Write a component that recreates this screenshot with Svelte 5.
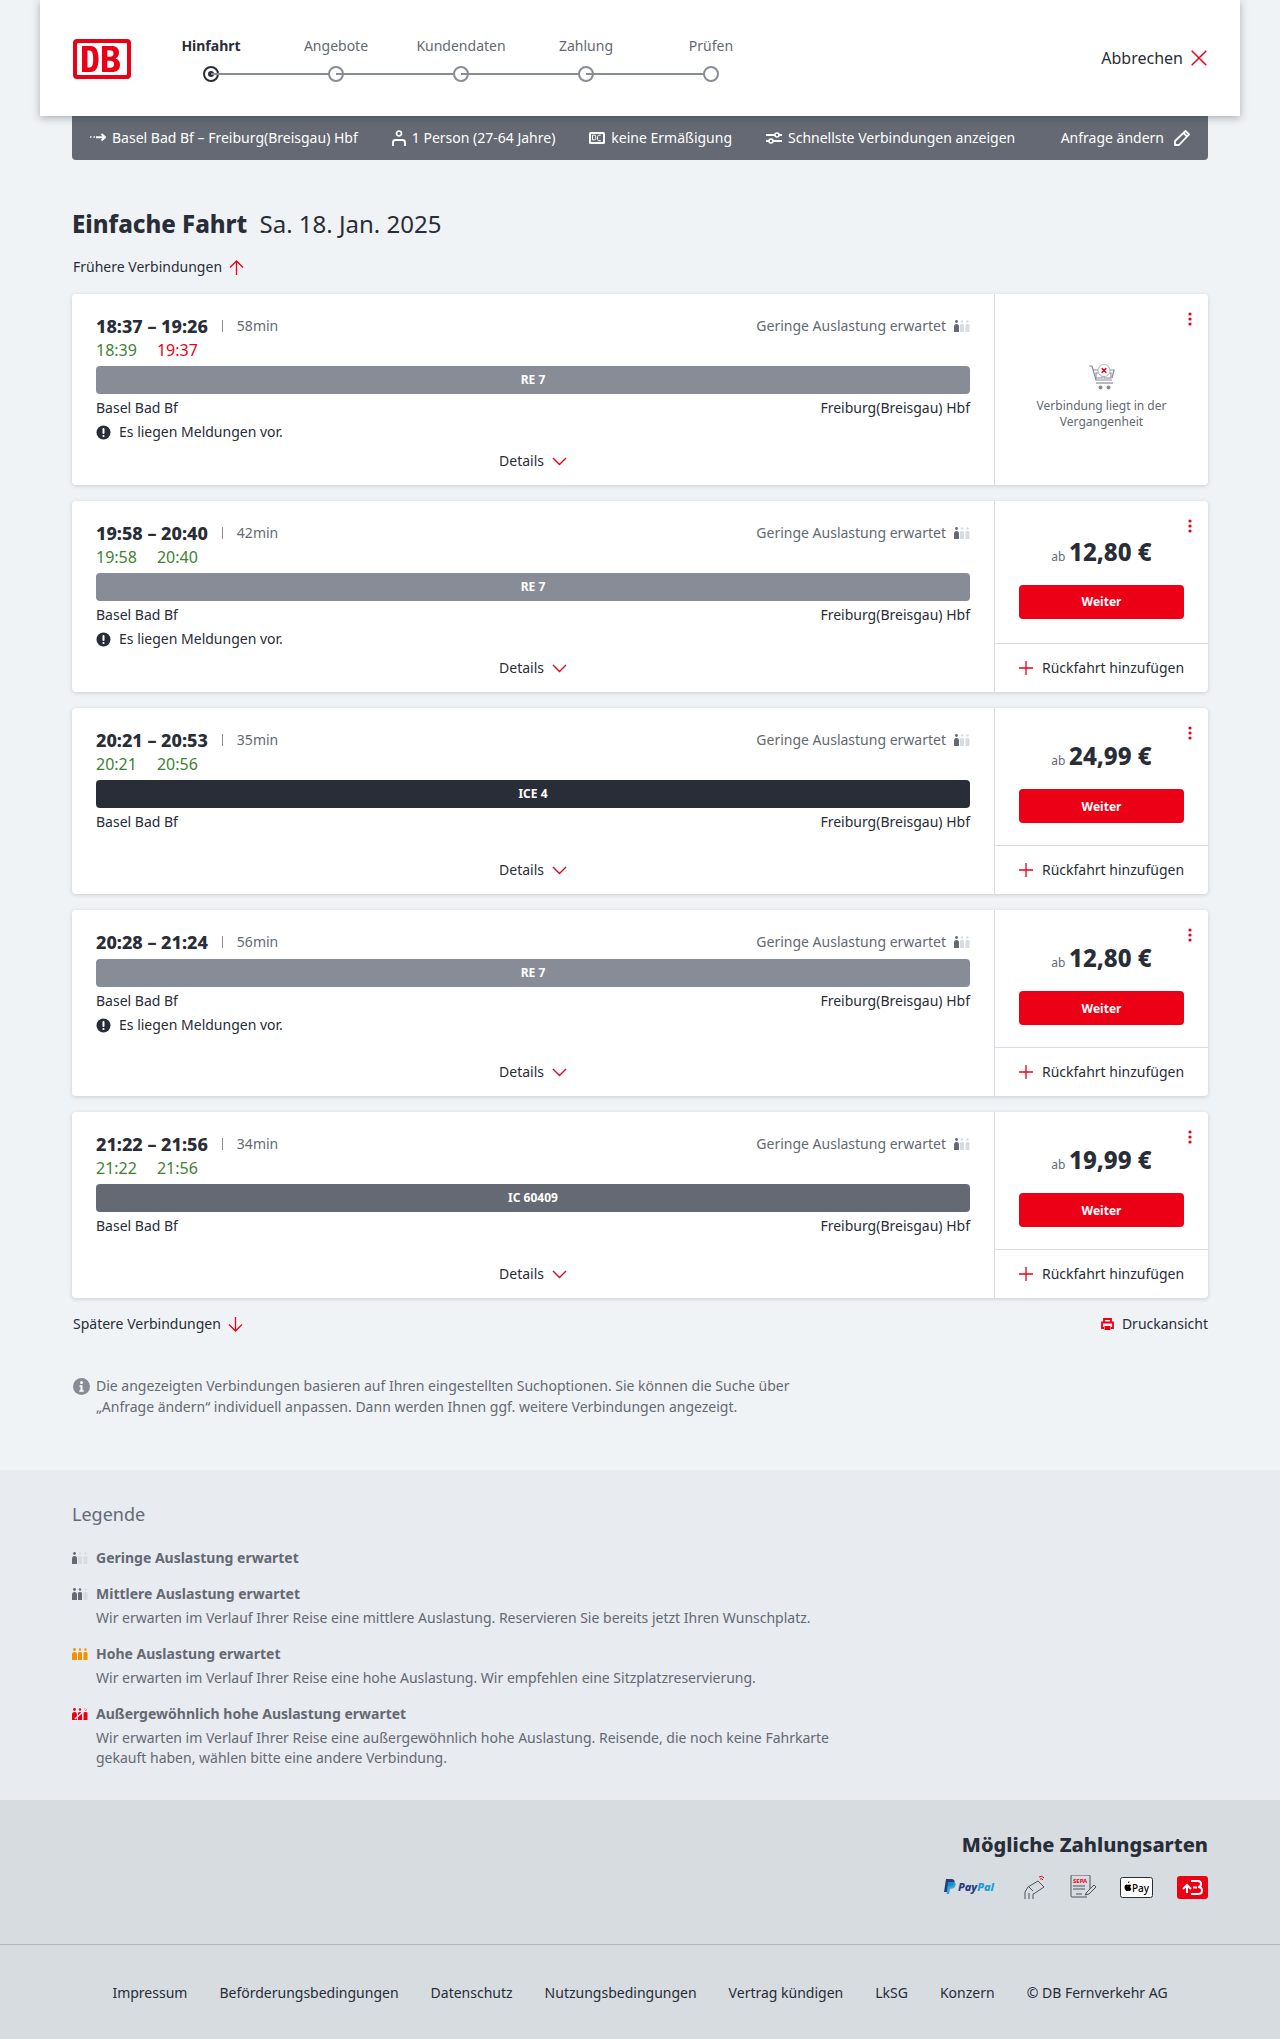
<script>
  const steps = ['Hinfahrt', 'Angebote', 'Kundendaten', 'Zahlung', 'Prüfen']

  const trips = [
    { time: '18:37 – 19:26', dur: '58min', dep: '18:39', arr: '19:37', late: true, train: 'RE 7', kind: 're', msg: true, past: true },
    { time: '19:58 – 20:40', dur: '42min', dep: '19:58', arr: '20:40', train: 'RE 7', kind: 're', msg: true, price: '12,80 €' },
    { time: '20:21 – 20:53', dur: '35min', dep: '20:21', arr: '20:56', train: 'ICE 4', kind: 'ice', price: '24,99 €' },
    { time: '20:28 – 21:24', dur: '56min', train: 'RE 7', kind: 're', msg: true, price: '12,80 €' },
    { time: '21:22 – 21:56', dur: '34min', dep: '21:22', arr: '21:56', train: 'IC 60409', kind: 'ic', price: '19,99 €' }
  ]

  const legend = [
    { title: 'Geringe Auslastung erwartet', colors: ['#646973', '#d7dce1', '#d7dce1'] },
    { title: 'Mittlere Auslastung erwartet', colors: ['#646973', '#646973', '#d7dce1'], text: 'Wir erwarten im Verlauf Ihrer Reise eine mittlere Auslastung. Reservieren Sie bereits jetzt Ihren Wunschplatz.' },
    { title: 'Hohe Auslastung erwartet', colors: ['#f39200', '#f39200', '#f39200'], text: 'Wir erwarten im Verlauf Ihrer Reise eine hohe Auslastung. Wir empfehlen eine Sitzplatzreservierung.' },
    { title: 'Außergewöhnlich hohe Auslastung erwartet', colors: ['#ec0016', '#ec0016', '#ec0016'], full: true, text: 'Wir erwarten im Verlauf Ihrer Reise eine außergewöhnlich hohe Auslastung. Reisende, die noch keine Fahrkarte gekauft haben, wählen bitte eine andere Verbindung.' }
  ]

  const links = ['Impressum', 'Beförderungsbedingungen', 'Datenschutz', 'Nutzungsbedingungen', 'Vertrag kündigen', 'LkSG', 'Konzern', '© DB Fernverkehr AG']
</script>

{#snippet occ(colors, full)}
  <svg class="occ" width="16" height="12" viewBox="0 0 16 12">
    <circle cx="2.5" cy="1.5" r="1.4" fill={colors[0]} />
    <path d="M0 6.5 Q0 4 2.5 4 Q5 4 5 6.5 V12 H0Z" fill={colors[0]} />
    <circle cx="8" cy="1.5" r="1.2" fill={colors[1]} />
    <path d="M6 5 Q6 4 8 4 Q10 4 10 5 V12 H6Z" fill={colors[1]} />
    <circle cx="13.5" cy="1.5" r="1.2" fill={colors[2]} />
    <path d="M11.5 5 Q11.5 4 13.5 4 Q15.5 4 15.5 5 V12 H11.5Z" fill={colors[2]} />
    {#if full}
      <path d="M3 11 L15 0" stroke="#e9ecf0" stroke-width="1.6" />
    {/if}
  </svg>
{/snippet}

<header class="head">
  <svg class="logo" width="58" height="40" viewBox="0 0 58 40">
    <rect width="58" height="40" rx="4" fill="#ec0016" />
    <rect x="4" y="4" width="50" height="32" rx="1" fill="#fff" />
    <path fill="#ec0016" fill-rule="evenodd" d="M9 7h8.500c5.500 0 8 4.500 8 13s-2.500 13-8 13H9zM14.500 11.500v17h2c2.800 0 3.700-3 3.700-8.500s-.9-8.500-3.700-8.500zM29 7h9.500c5 0 7.500 2.500 7.500 6.500 0 3-1.300 5-3.500 6 2.800.8 4.500 3 4.500 6.500 0 4.500-3 7-8 7H29zM34.300 11.300v6.400h2.700c2 0 3.500-1 3.500-3.200s-1.400-3.200-3.500-3.200zM34.300 21.700v7h3c2.400 0 3.800-1.200 3.800-3.500s-1.400-3.500-3.800-3.500z" />
  </svg>
  <ol class="steps">
    {#each steps as s, i}
      <li class="step" class:on={i === 0}>
        <span>{s}</span>
        <i class="dot"></i>
      </li>
    {/each}
  </ol>
  <div class="cancel">
    Abbrechen
    <svg width="16" height="16" viewBox="0 0 16 16"><path d="M.7.7l14.600 14.600M15.300.7L.7 15.300" stroke="#ec0016" stroke-width="1.500" fill="none" /></svg>
  </div>
</header>

<div class="query">
  <div class="q">
    <svg width="16" height="10" viewBox="0 0 16 10"><path d="M0 4h1.500M3.500 4h1.500" stroke="#fff" stroke-width="1.500" /><path d="M6 4.200h8M11.500 1l3.500 3.200-3.500 3.200" stroke="#fff" stroke-width="2" fill="none" /></svg>
    Basel Bad Bf – Freiburg(Breisgau) Hbf
  </div>
  <div class="q">
    <svg width="14" height="16" viewBox="0 0 14 16"><circle cx="7" cy="3.500" r="2.500" fill="none" stroke="#fff" stroke-width="1.700" /><path d="M1 16v-3.500c0-1.500 1-2.500 2.500-2.500h7c1.500 0 2.500 1 2.500 2.500V16" fill="none" stroke="#fff" stroke-width="1.800" /></svg>
    1 Person (27-64 Jahre)
  </div>
  <div class="q">
    <svg width="16" height="12" viewBox="0 0 16 12"><rect width="16" height="12" rx="1.500" fill="#fff" /><rect x="2" y="2" width="12" height="8" fill="#646973" /><path d="M3.500 3.200h2.200c.8 0 1 .5 1 1.200 0 .5-.2.900-.6 1 .5.100.8.500.8 1.200 0 .8-.4 1.200-1.200 1.200H3.500zM11.800 3.200H10c-.9 0-1.500.7-1.500 2.800s.6 2.800 1.500 2.800h1.800" fill="none" stroke="#fff" stroke-width="1" /></svg>
    keine Ermäßigung
  </div>
  <div class="q">
    <svg width="16" height="14" viewBox="0 0 16 14"><path d="M0 4h9M13 4h3M0 10h3M7 10h9" stroke="#fff" stroke-width="1.800" /><circle cx="11" cy="4" r="2" fill="none" stroke="#fff" stroke-width="1.600" /><circle cx="5" cy="10" r="2" fill="none" stroke="#fff" stroke-width="1.600" /></svg>
    Schnellste Verbindungen anzeigen
  </div>
  <div class="q change">
    Anfrage ändern
    <svg width="16" height="16" viewBox="0 0 16 16"><path d="M11.500 1l3.500 3.500L5 15H1v-4z" fill="none" stroke="#fff" stroke-width="1.800" stroke-linejoin="round" /><path d="M9.500 3l3.500 3.500" stroke="#fff" stroke-width="1.800" /></svg>
  </div>
</div>

<main class="page">
  <h1><b>Einfache Fahrt</b> <span>Sa. 18. Jan. 2025</span></h1>

  <div class="nav">
    Frühere Verbindungen
    <svg width="15" height="15" viewBox="0 0 15 15"><path d="M7.500 15V1M1 7.500L7.500 1 14 7.500" fill="none" stroke="#ec0016" stroke-width="1.300" /></svg>
  </div>

  <div class="list">
    {#each trips as t}
      <article class="card">
        <div class="main">
          <div class="top">
            <div class="times"><b>{t.time}</b><i></i><span>{t.dur}</span></div>
            <div class="load">Geringe Auslastung erwartet {@render occ(['#646973', '#d7dce1', '#d7dce1'])}</div>
          </div>
          {#if t.dep}
            <div class="real">
              <span class="ok">{t.dep}</span>
              <span class={t.late ? 'bad' : 'ok'}>{t.arr}</span>
            </div>
          {/if}
          <div class="train {t.kind}" class:tight={!t.dep}>{t.train}</div>
          <div class="stations"><span>Basel Bad Bf</span><span>Freiburg(Breisgau) Hbf</span></div>
          {#if t.msg}
            <div class="msg">
              <svg width="15" height="15" viewBox="0 0 15 15"><circle cx="7.500" cy="7.500" r="7" fill="#282d37" /><rect x="6.500" y="3" width="2" height="6" rx="1" fill="#fff" /><circle cx="7.500" cy="11" r="1.100" fill="#fff" /></svg>
              Es liegen Meldungen vor.
            </div>
          {/if}
          <div class="details">
            Details
            <svg width="15" height="9" viewBox="0 0 15 9"><path d="M1 1l6.500 6.500L14 1" fill="none" stroke="#ec0016" stroke-width="1.400" /></svg>
          </div>
        </div>

        <aside class="side">
          <svg class="kebab" width="4" height="14" viewBox="0 0 4 14"><circle cx="2" cy="2" r="1.600" fill="#ec0016" /><circle cx="2" cy="7" r="1.600" fill="#ec0016" /><circle cx="2" cy="12" r="1.600" fill="#ec0016" /></svg>
          {#if t.past}
            <div class="past">
              <svg width="26" height="26" viewBox="0 0 26 26">
                <path d="M0 2h3l4 14h16M4.500 6H25l-2 8" fill="none" stroke="#878c96" stroke-width="1.200" />
                <path d="M7 9h6v5H7zM15 9h7v5h-7z" fill="none" stroke="#878c96" stroke-width="1.100" />
                <path d="M7 19h17" stroke="#878c96" stroke-width="1.200" />
                <circle cx="11.500" cy="23.500" r="2" fill="#878c96" /><circle cx="19.500" cy="23.500" r="2" fill="#878c96" />
                <circle cx="15" cy="6.500" r="6" fill="#fff" stroke="#afb4bb" stroke-width="1" />
                <path d="M12.700 4.200l4.600 4.600M17.300 4.200l-4.600 4.600" stroke="#ec0016" stroke-width="1.600" />
              </svg>
              <p>Verbindung liegt in der Vergangenheit</p>
            </div>
          {:else}
            <div class="buy">
              <div class="price"><small>ab</small> <b>{t.price}</b></div>
              <button>Weiter</button>
            </div>
            <div class="back">
              <svg width="14" height="14" viewBox="0 0 14 14"><path d="M7 0v14M0 7h14" stroke="#ec0016" stroke-width="1.300" /></svg>
              Rückfahrt hinzufügen
            </div>
          {/if}
        </aside>
      </article>
    {/each}
  </div>

  <div class="after">
    <div class="nav flat">
      Spätere Verbindungen
      <svg width="15" height="15" viewBox="0 0 15 15"><path d="M7.500 0v14M1 7.500L7.500 14 14 7.500" fill="none" stroke="#ec0016" stroke-width="1.300" /></svg>
    </div>
    <div class="print">
      <svg width="13" height="13" viewBox="0 0 13 13"><path d="M3 4V1h7v3M3 10H1V4.500h11V10h-2" fill="none" stroke="#ec0016" stroke-width="1.800" /><path d="M3.500 8h6v4h-6z" fill="#ec0016" /></svg>
      Druckansicht
    </div>
  </div>

  <div class="info">
    <svg width="17" height="17" viewBox="0 0 17 17"><circle cx="8.500" cy="8.500" r="8.500" fill="#878c96" /><circle cx="8.500" cy="4.500" r="1.500" fill="#fff" /><path d="M6.500 7.200h3v5h1.200v1.500H6.300v-1.500h1.200V8.700h-1z" fill="#fff" /></svg>
    <p>Die angezeigten Verbindungen basieren auf Ihren eingestellten Suchoptionen. Sie können die Suche über „Anfrage ändern“ individuell anpassen. Dann werden Ihnen ggf. weitere Verbindungen angezeigt.</p>
  </div>
</main>

<section class="legend">
  <h2>Legende</h2>
  {#each legend as l}
    <div class="item">
      <div class="ltitle">{@render occ(l.colors, l.full)}<b>{l.title}</b></div>
      {#if l.text}<p>{l.text}</p>{/if}
    </div>
  {/each}
</section>

<section class="pay">
  <h3>Mögliche Zahlungsarten</h3>
  <div class="methods">
    <svg width="56" height="16" viewBox="0 0 56 16">
      <path d="M2 0h5c3 0 4 1.500 3.500 3.500-.5 2.500-2.500 4-5 4H4L3 13H0z" fill="#253b80" />
      <path d="M4 3h5c2.500 0 3 1.500 2.600 3.300-.5 2.200-2.200 3.400-4.400 3.400H6L5 15H2.500z" fill="#179bd7" opacity=".85" />
      <text x="14" y="12" class="pp">Pay<tspan fill="#179bd7">Pal</tspan></text>
    </svg>
    <svg width="22" height="24" viewBox="0 0 22 24" fill="none" stroke="#4d525c" stroke-width="1">
      <path d="M1 24v-7l3-5 10-6 6 6-9 6M5 24v-6M9 24v-5l2-1M5 12l4 4" />
      <path d="M15 2q3-2 5 1M16 4q2-1 3 1" stroke="#ec0016" />
    </svg>
    <svg width="26" height="24" viewBox="0 0 26 24" fill="none" stroke="#4d525c" stroke-width="1">
      <path d="M17 22H2q-1 0-1-1V1q0-1 1-1h17q1 0 1 1v13" />
      <text x="3" y="8" class="sepa">SEPA</text>
      <path d="M3 11h12M3 14h12M6 19h6" />
      <path d="M15 20l2-3 7-7 2 2-7 7z" />
    </svg>
    <svg width="33" height="21" viewBox="0 0 33 21">
      <rect x=".5" y=".5" width="32" height="20" rx="2" fill="#fff" stroke="#282d37" />
      <path d="M8 6c1 0 1.500-.8 1.500-1.700-1 .1-1.700.8-1.500 1.700zM10.300 10c0-1 .7-1.400 1-1.600-.5-.8-1.400-1-1.700-1-.6 0-1.200.4-1.600.4-.4 0-1-.4-1.500-.4-1 0-2 1-2 2.700 0 2 1.300 4 2.200 4 .5 0 .8-.4 1.400-.4s.8.400 1.400.400c1 0 1.600-1.400 1.900-2.300-.7-.3-1.100-1-1.100-1.800z" fill="#000" />
      <text x="12" y="14.500" class="apple">Pay</text>
    </svg>
    <svg width="31" height="23" viewBox="0 0 31 23">
      <rect width="31" height="23" rx="3" fill="#ec0016" />
      <path d="M14 5h7q3 0 3 3t-3 3q4 0 4 3.500t-4 3.500h-7M16 11.500h4M6 13l4-4 4 4M10 9v8" fill="none" stroke="#fff" stroke-width="2" />
    </svg>
  </div>
</section>

<footer class="foot">
  {#each links as l}<span>{l}</span>{/each}
</footer>

<style>
  :global(body) {
    background: #f0f3f5;
    color: #282d37;
    font-family: "Noto Sans", "Liberation Sans", sans-serif;
    font-size: 14px;
    line-height: 20px;
  }

  .head {
    display: flex;
    align-items: center;
    height: 116px;
    margin: 0 40px;
    padding: 0 33px;
    box-sizing: border-box;
    background: #fff;
    box-shadow: 0 2px 8px rgba(40, 45, 55, .35);
    position: relative;
  }
  .logo {
    margin-top: 1px;
    flex: none;
  }
  .steps {
    display: grid;
    grid-template-columns: repeat(5, 125px);
    margin: 0 0 0 17.5px;
    padding: 0;
    list-style: none;
  }
  .step {
    display: flex;
    flex-direction: column;
    align-items: center;
    gap: 10px;
    position: relative;
    color: #646973;
    font-size: 14px;
    margin-top: 2px;
  }
  .step.on {
    color: #282d37;
    font-weight: 700;
  }
  .step:not(:first-child)::before {
    content: '';
    position: absolute;
    left: -50%;
    right: 50%;
    bottom: 7px;
    height: 2px;
    background: #878c96;
  }
  .dot {
    width: 16px;
    height: 16px;
    box-sizing: border-box;
    border: 2px solid #878c96;
    border-radius: 50%;
    background: #fff;
    position: relative;
  }
  .on .dot {
    border-color: #282d37;
  }
  .on .dot::after {
    content: '';
    position: absolute;
    inset: 3px;
    border-radius: 50%;
    background: #282d37;
  }
  .cancel {
    margin-left: auto;
    display: flex;
    align-items: center;
    gap: 8px;
    font-size: 16px;
    color: #282d37;
  }

  .query {
    display: flex;
    align-items: center;
    height: 44px;
    margin: 0 72px;
    padding: 0 18px;
    background: #646973;
    border-radius: 0 0 4px 4px;
    color: #fff;
  }
  .q {
    display: flex;
    align-items: center;
    gap: 6px;
    margin-right: 34px;
    white-space: nowrap;
  }
  .q.change {
    margin: 0 0 0 auto;
    gap: 10px;
  }

  .page {
    padding: 0 72px;
  }
  h1 {
    margin: 46px 0 0;
    font-size: 24px;
    line-height: 36px;
    font-weight: 400;
  }
  h1 b {
    font-weight: 800;
    margin-right: 6px;
  }
  .nav {
    display: flex;
    align-items: center;
    gap: 7px;
    margin: 15px 0 0 1px;
    height: 20px;
  }
  .nav.flat {
    margin-top: 0;
  }

  .list {
    display: flex;
    flex-direction: column;
    gap: 16px;
    margin-top: 17px;
  }
  .card {
    display: flex;
    min-height: 186px;
    background: #fff;
    border-radius: 4px;
    box-shadow: 0 1px 4px rgba(40, 45, 55, .18);
  }
  .main {
    flex: 1;
    min-width: 0;
    display: flex;
    flex-direction: column;
    padding: 20px 24px 12px;
  }
  .top {
    display: flex;
    justify-content: space-between;
    align-items: center;
    height: 24px;
  }
  .times {
    display: flex;
    align-items: center;
  }
  .times b {
    font-size: 18px;
    font-weight: 800;
  }
  .times i {
    width: 1px;
    height: 12px;
    margin: 0 14px;
    background: #878c96;
  }
  .times span {
    color: #646973;
  }
  .load {
    display: flex;
    align-items: center;
    gap: 8px;
    color: #646973;
  }
  .real {
    display: flex;
    gap: 20px;
    height: 24px;
    line-height: 24px;
    font-size: 16px;
  }
  .ok {
    color: #408335;
  }
  .bad {
    color: #ec0016;
  }
  .train {
    margin-top: 4px;
    height: 28px;
    line-height: 28px;
    border-radius: 4px;
    text-align: center;
    color: #fff;
    font-size: 12px;
    font-weight: 700;
  }
  .train.tight {
    margin-top: 5px;
  }
  .re {
    background: #878c96;
  }
  .ice {
    background: #282d37;
  }
  .ic {
    background: #646973;
  }
  .stations {
    display: flex;
    justify-content: space-between;
    margin-top: 4px;
  }
  .msg {
    display: flex;
    align-items: center;
    gap: 8px;
    margin-top: 4px;
  }
  .details {
    display: flex;
    align-items: center;
    justify-content: center;
    gap: 8px;
    height: 24px;
    margin-top: auto;
    padding-top: 7px;
    box-sizing: content-box;
  }

  .side {
    position: relative;
    flex: none;
    width: 213px;
    display: flex;
    flex-direction: column;
    border-left: 1px solid #d7dce1;
  }
  .kebab {
    position: absolute;
    top: 18px;
    right: 16px;
  }
  .past {
    flex: 1;
    display: flex;
    flex-direction: column;
    align-items: center;
    justify-content: center;
    gap: 8px;
    padding: 14px 28px 0;
    color: #646973;
    font-size: 12px;
    line-height: 16px;
    text-align: center;
  }
  .past p {
    margin: 0;
  }
  .buy {
    flex: 1;
    display: flex;
    flex-direction: column;
    align-items: center;
    justify-content: center;
    padding-top: 10px;
  }
  .price {
    line-height: 32px;
  }
  .price small {
    font-size: 12px;
    color: #646973;
  }
  .price b {
    font-size: 24px;
    font-weight: 800;
  }
  button {
    width: 165px;
    height: 34px;
    margin-top: 12px;
    border: 0;
    border-radius: 4px;
    background: #ec0016;
    color: #fff;
    font: 700 12px "Noto Sans", sans-serif;
  }
  .back {
    display: flex;
    align-items: center;
    justify-content: center;
    gap: 9px;
    height: 48px;
    border-top: 1px solid #d7dce1;
  }

  .after {
    display: flex;
    justify-content: space-between;
    align-items: center;
    margin-top: 16px;
  }
  .print {
    display: flex;
    align-items: center;
    gap: 8px;
  }
  .info {
    display: flex;
    gap: 6px;
    margin: 42px 0 0 1px;
    max-width: 760px;
    color: #646973;
  }
  .info svg {
    flex: none;
    margin-top: 2px;
  }
  .info p {
    margin: 0;
    line-height: 20.500px;
  }

  .legend {
    margin-top: 53px;
    padding: 32px 72px 32px;
    background: #e8ebf0;
    color: #646973;
  }
  h2 {
    margin: 0 0 22px;
    font-size: 18px;
    line-height: 24px;
    font-weight: 400;
  }
  .item {
    margin-top: 16px;
  }
  .ltitle {
    display: flex;
    align-items: center;
    gap: 8px;
  }
  .item p {
    margin: 4px 0 0 24px;
    max-width: 770px;
  }

  .pay {
    height: 145px;
    padding: 32px 72px 0;
    box-sizing: border-box;
    background: #d7dce1;
    border-bottom: 1px solid #afb4bb;
    text-align: right;
  }
  h3 {
    margin: 0;
    font-size: 20px;
    line-height: 26px;
    font-weight: 800;
  }
  .methods {
    display: flex;
    justify-content: flex-end;
    align-items: center;
    gap: 24px;
    margin-top: 17px;
  }
  .pp {
    font: italic 800 11px "Noto Sans", sans-serif;
    fill: #253b80;
  }
  .sepa {
    font: 700 6px "Noto Sans", sans-serif;
    fill: #ec0016;
    stroke: none;
  }
  .apple {
    font: 500 10px "Noto Sans", sans-serif;
    fill: #000;
  }

  .foot {
    display: flex;
    justify-content: center;
    align-items: center;
    gap: 32px;
    height: 95px;
    background: #d7dce1;
  }
</style>
